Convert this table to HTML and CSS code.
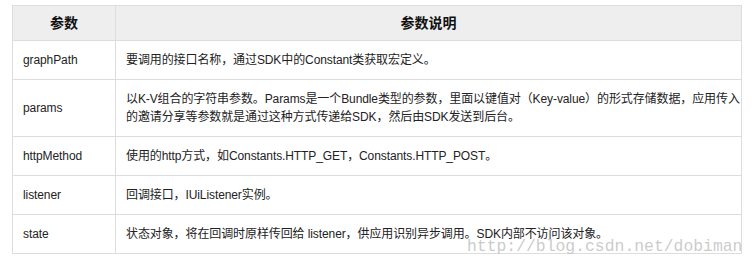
FILE: index.html
```html
<!DOCTYPE html>
<html lang="zh-CN">
<head>
<meta charset="utf-8">
<title>参数说明</title>
<link rel="stylesheet" href="styles.css">
</head>
<body>
<div class="wrap">
  <table class="params">
    <colgroup>
      <col class="c-name">
      <col class="c-desc">
    </colgroup>
    <thead>
      <tr><th>参数</th><th>参数说明</th></tr>
    </thead>
    <tbody>
      <tr><td>graphPath</td><td>要调用的接口名称，通过SDK中的Constant类获取宏定义。</td></tr>
      <tr><td>params</td><td>以K-V组合的字符串参数。Params是一个Bundle类型的参数，里面以键值对（Key-value）的形式存储数据，应用传入<br>的邀请分享等参数就是通过这种方式传递给SDK，然后由SDK发送到后台。</td></tr>
      <tr><td>httpMethod</td><td>使用的http方式，如Constants.HTTP_GET，Constants.HTTP_POST。</td></tr>
      <tr><td>listener</td><td>回调接口，IUiListener实例。</td></tr>
      <tr><td>state</td><td>状态对象，将在回调时原样传回给 listener，供应用识别异步调用。SDK内部不访问该对象。</td></tr>
    </tbody>
  </table>
  <div class="watermark">http://blog.csdn.net/dobiman</div>
</div>
</body>
</html>
```
FILE: styles.css
```css
html, body {
  margin: 0;
  padding: 0;
  background: #ffffff;
}

.wrap {
  position: relative;
  padding: 5px 0 0 12px;
}

.params {
  border-collapse: collapse;
  table-layout: fixed;
  width: 730px;
  font-family: "Liberation Sans", "Noto Sans CJK SC", sans-serif;
  font-size: 12px;
  line-height: 18px;
  color: #222222;
}

.c-name { width: 103px; }

.params th,
.params td {
  border: 1px solid #dddddd;
  text-align: left;
  vertical-align: middle;
  white-space: nowrap;
}

.params th {
  background: #eeeeee;
  font-size: 14px;
  font-weight: bold;
  text-align: center;
  padding: 8px 10px;
  color: #111111;
}

.params td {
  padding: 10px 10px;
  letter-spacing: -0.1px;
}

.watermark {
  position: absolute;
  left: 467px;
  top: 237px;
  font-family: "Liberation Mono", monospace;
  font-size: 16.4px;
  line-height: 20px;
  color: rgba(185, 185, 185, 0.75);
  white-space: nowrap;
}
```
